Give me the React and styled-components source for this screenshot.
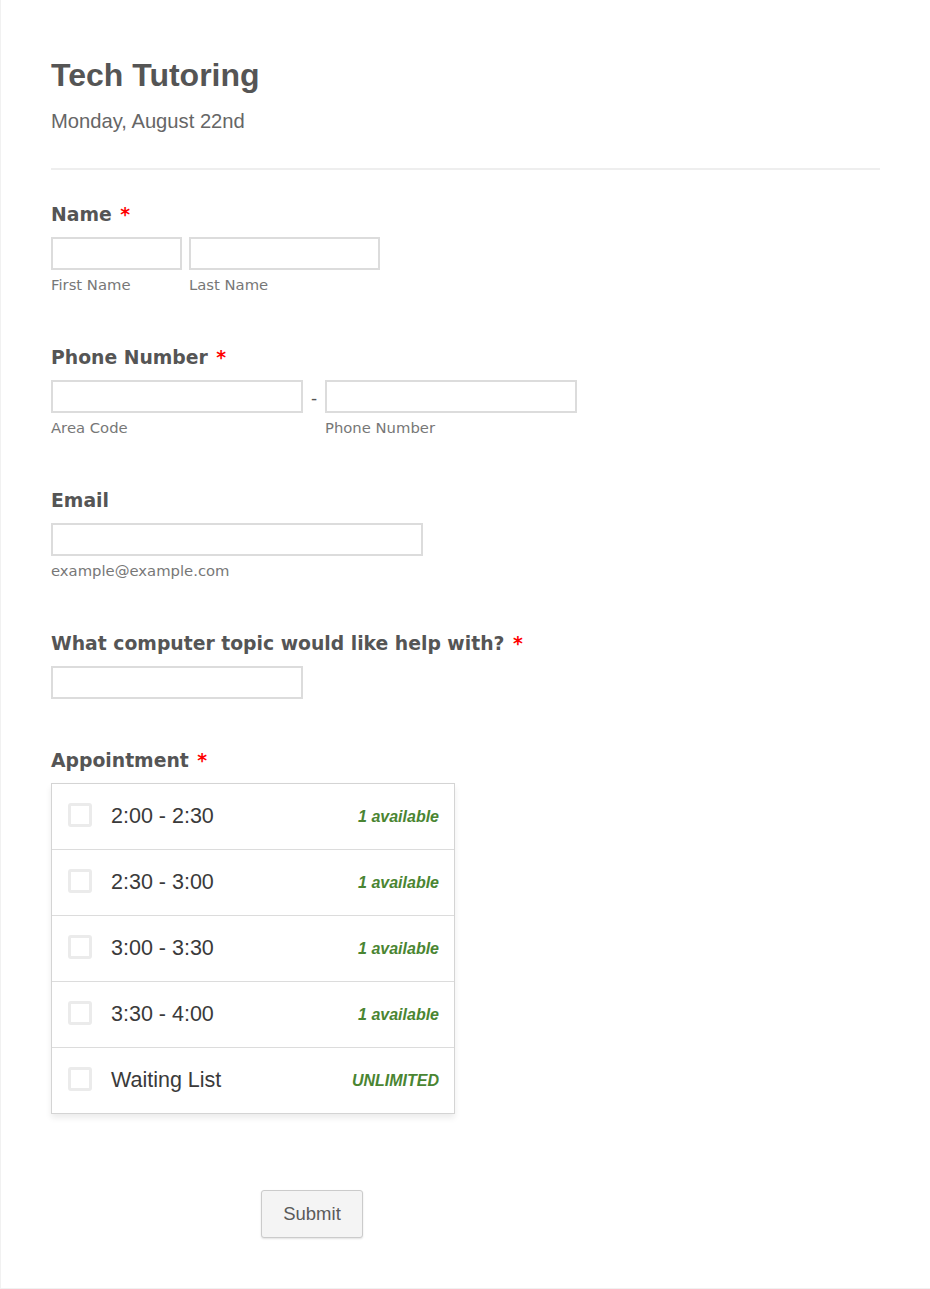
import React from 'react';
import styled, { createGlobalStyle } from 'styled-components';

const GlobalStyle = createGlobalStyle`
	body {
		margin: 0;
		background: #fff;
		font-family: "Liberation Sans", Arial, sans-serif;
	}
`;

const Page = styled.div`
	box-sizing: border-box;
	width: 930px;
	min-height: 1289px;
	padding: 57px 50px 49px 50px;
	border-left: 1px solid #f1f1f1;
	border-bottom: 1px solid #f1f1f1;
`;

const Title = styled.h1`
	margin: 0;
	font-family: "Liberation Sans", Arial, sans-serif;
	font-size: 32px;
	line-height: 36px;
	font-weight: bold;
	color: #555;
`;

const Subtitle = styled.p`
	margin: 16px 0 0;
	font-family: "Liberation Sans", Arial, sans-serif;
	font-size: 20.2px;
	line-height: 24px;
	color: #666;
`;

const Divider = styled.hr`
	margin: 35px 0 31px;
	border: 0;
	height: 2px;
	background: #eee;
`;

const Section = styled.div`
	padding-bottom: 48px;
`;

const Label = styled.div`
	padding-top: 2px;
	margin-bottom: 10px;
	font-family: "DejaVu Sans", Verdana, sans-serif;
	font-size: 18.8px;
	line-height: 24px;
	font-weight: bold;
	color: #555;
`;

const Required = styled.span`
	margin-left: 2px;
	color: #f00;
`;

const Row = styled.div`
	display: flex;
	align-items: flex-start;
	gap: ${(p) => p.$gap || 0}px;
`;

const Field = styled.div`
	display: flex;
	flex-direction: column;
`;

const Input = styled.input`
	box-sizing: border-box;
	width: ${(p) => p.$width}px;
	height: 33px;
	margin: 0;
	padding: 4px 6px;
	border: 2px solid #dcdcdc;
	background: #fff;
	font-size: 15px;
	outline: none;
`;

const SubLabel = styled.span`
	margin-top: 6px;
	padding-bottom: 2px;
	font-family: "DejaVu Sans", Verdana, sans-serif;
	font-size: 14.8px;
	line-height: 18px;
	color: #777;
`;

const Dash = styled.span`
	width: 22px;
	height: 33px;
	padding-top: 3px;
	box-sizing: border-box;
	display: flex;
	align-items: center;
	justify-content: center;
	font-family: "DejaVu Sans", Verdana, sans-serif;
	font-size: 17px;
	color: #555;
`;

const SlotList = styled.div`
	width: 404px;
	box-sizing: border-box;
	border: 1px solid #d4d4d4;
	box-shadow: 0 4px 6px rgba(0, 0, 0, 0.08);
	background: #fff;
`;

const Slot = styled.label`
	display: flex;
	align-items: center;
	height: 65px;
	padding: 0 15px 0 16px;
	border-top: ${(p) => (p.$first ? 'none' : '1px solid #dcdcdc')};
	cursor: pointer;
`;

const Box = styled.span`
	box-sizing: border-box;
	width: 24px;
	height: 24px;
	margin: 0 19px 4px 0;
	border: 3px solid #ebebeb;
	border-radius: 3px;
	background: #fff;
`;

const SlotText = styled.span`
	flex: 1;
	font-family: "Liberation Sans", Arial, sans-serif;
	font-size: 21.5px;
	color: #3a3a3a;
`;

const Availability = styled.span`
	font-family: "Liberation Sans", Arial, sans-serif;
	font-size: 16px;
	font-weight: bold;
	font-style: italic;
	color: #4a8532;
`;

const ButtonRow = styled.div`
	padding: 28px 0 0 210px;
`;

const SubmitButton = styled.button`
	width: 102px;
	height: 48px;
	border: 1px solid #cbcbcb;
	border-radius: 3px;
	background: #f4f4f4;
	box-shadow: 0 1px 2px rgba(0, 0, 0, 0.12);
	font-family: "Liberation Sans", Arial, sans-serif;
	font-size: 18.5px;
	color: #5a5a5a;
	cursor: pointer;
`;

const slots = [
	{ time: '2:00 - 2:30', left: '1 available' },
	{ time: '2:30 - 3:00', left: '1 available' },
	{ time: '3:00 - 3:30', left: '1 available' },
	{ time: '3:30 - 4:00', left: '1 available' },
	{ time: 'Waiting List', left: 'UNLIMITED' },
];

const FieldLabel = ({ children, required }) => (
	<Label>
		{children}
		{required && (
			<>
				{' '}
				<Required>*</Required>
			</>
		)}
	</Label>
);

const App = () => {
	return (
		<>
			<GlobalStyle />
			<Page>
				<Title>Tech Tutoring</Title>
				<Subtitle>Monday, August 22nd</Subtitle>
				<Divider />

				<Section>
					<FieldLabel required>Name</FieldLabel>
					<Row $gap={7}>
						<Field>
							<Input $width={131} />
							<SubLabel>First Name</SubLabel>
						</Field>
						<Field>
							<Input $width={191} />
							<SubLabel>Last Name</SubLabel>
						</Field>
					</Row>
				</Section>

				<Section>
					<FieldLabel required>Phone Number</FieldLabel>
					<Row>
						<Field>
							<Input $width={252} />
							<SubLabel>Area Code</SubLabel>
						</Field>
						<Dash>-</Dash>
						<Field>
							<Input $width={252} />
							<SubLabel>Phone Number</SubLabel>
						</Field>
					</Row>
				</Section>

				<Section>
					<FieldLabel>Email</FieldLabel>
					<Field>
						<Input $width={372} />
						<SubLabel>example@example.com</SubLabel>
					</Field>
				</Section>

				<Section>
					<FieldLabel required>What computer topic would like help with?</FieldLabel>
					<Input $width={252} />
				</Section>

				<Section>
					<FieldLabel required>Appointment</FieldLabel>
					<SlotList>
						{slots.map((s, i) => (
							<Slot key={s.time} $first={i === 0}>
								<Box />
								<SlotText>{s.time}</SlotText>
								<Availability>{s.left}</Availability>
							</Slot>
						))}
					</SlotList>
				</Section>

				<ButtonRow>
					<SubmitButton>Submit</SubmitButton>
				</ButtonRow>
			</Page>
		</>
	);
};

export default App;
